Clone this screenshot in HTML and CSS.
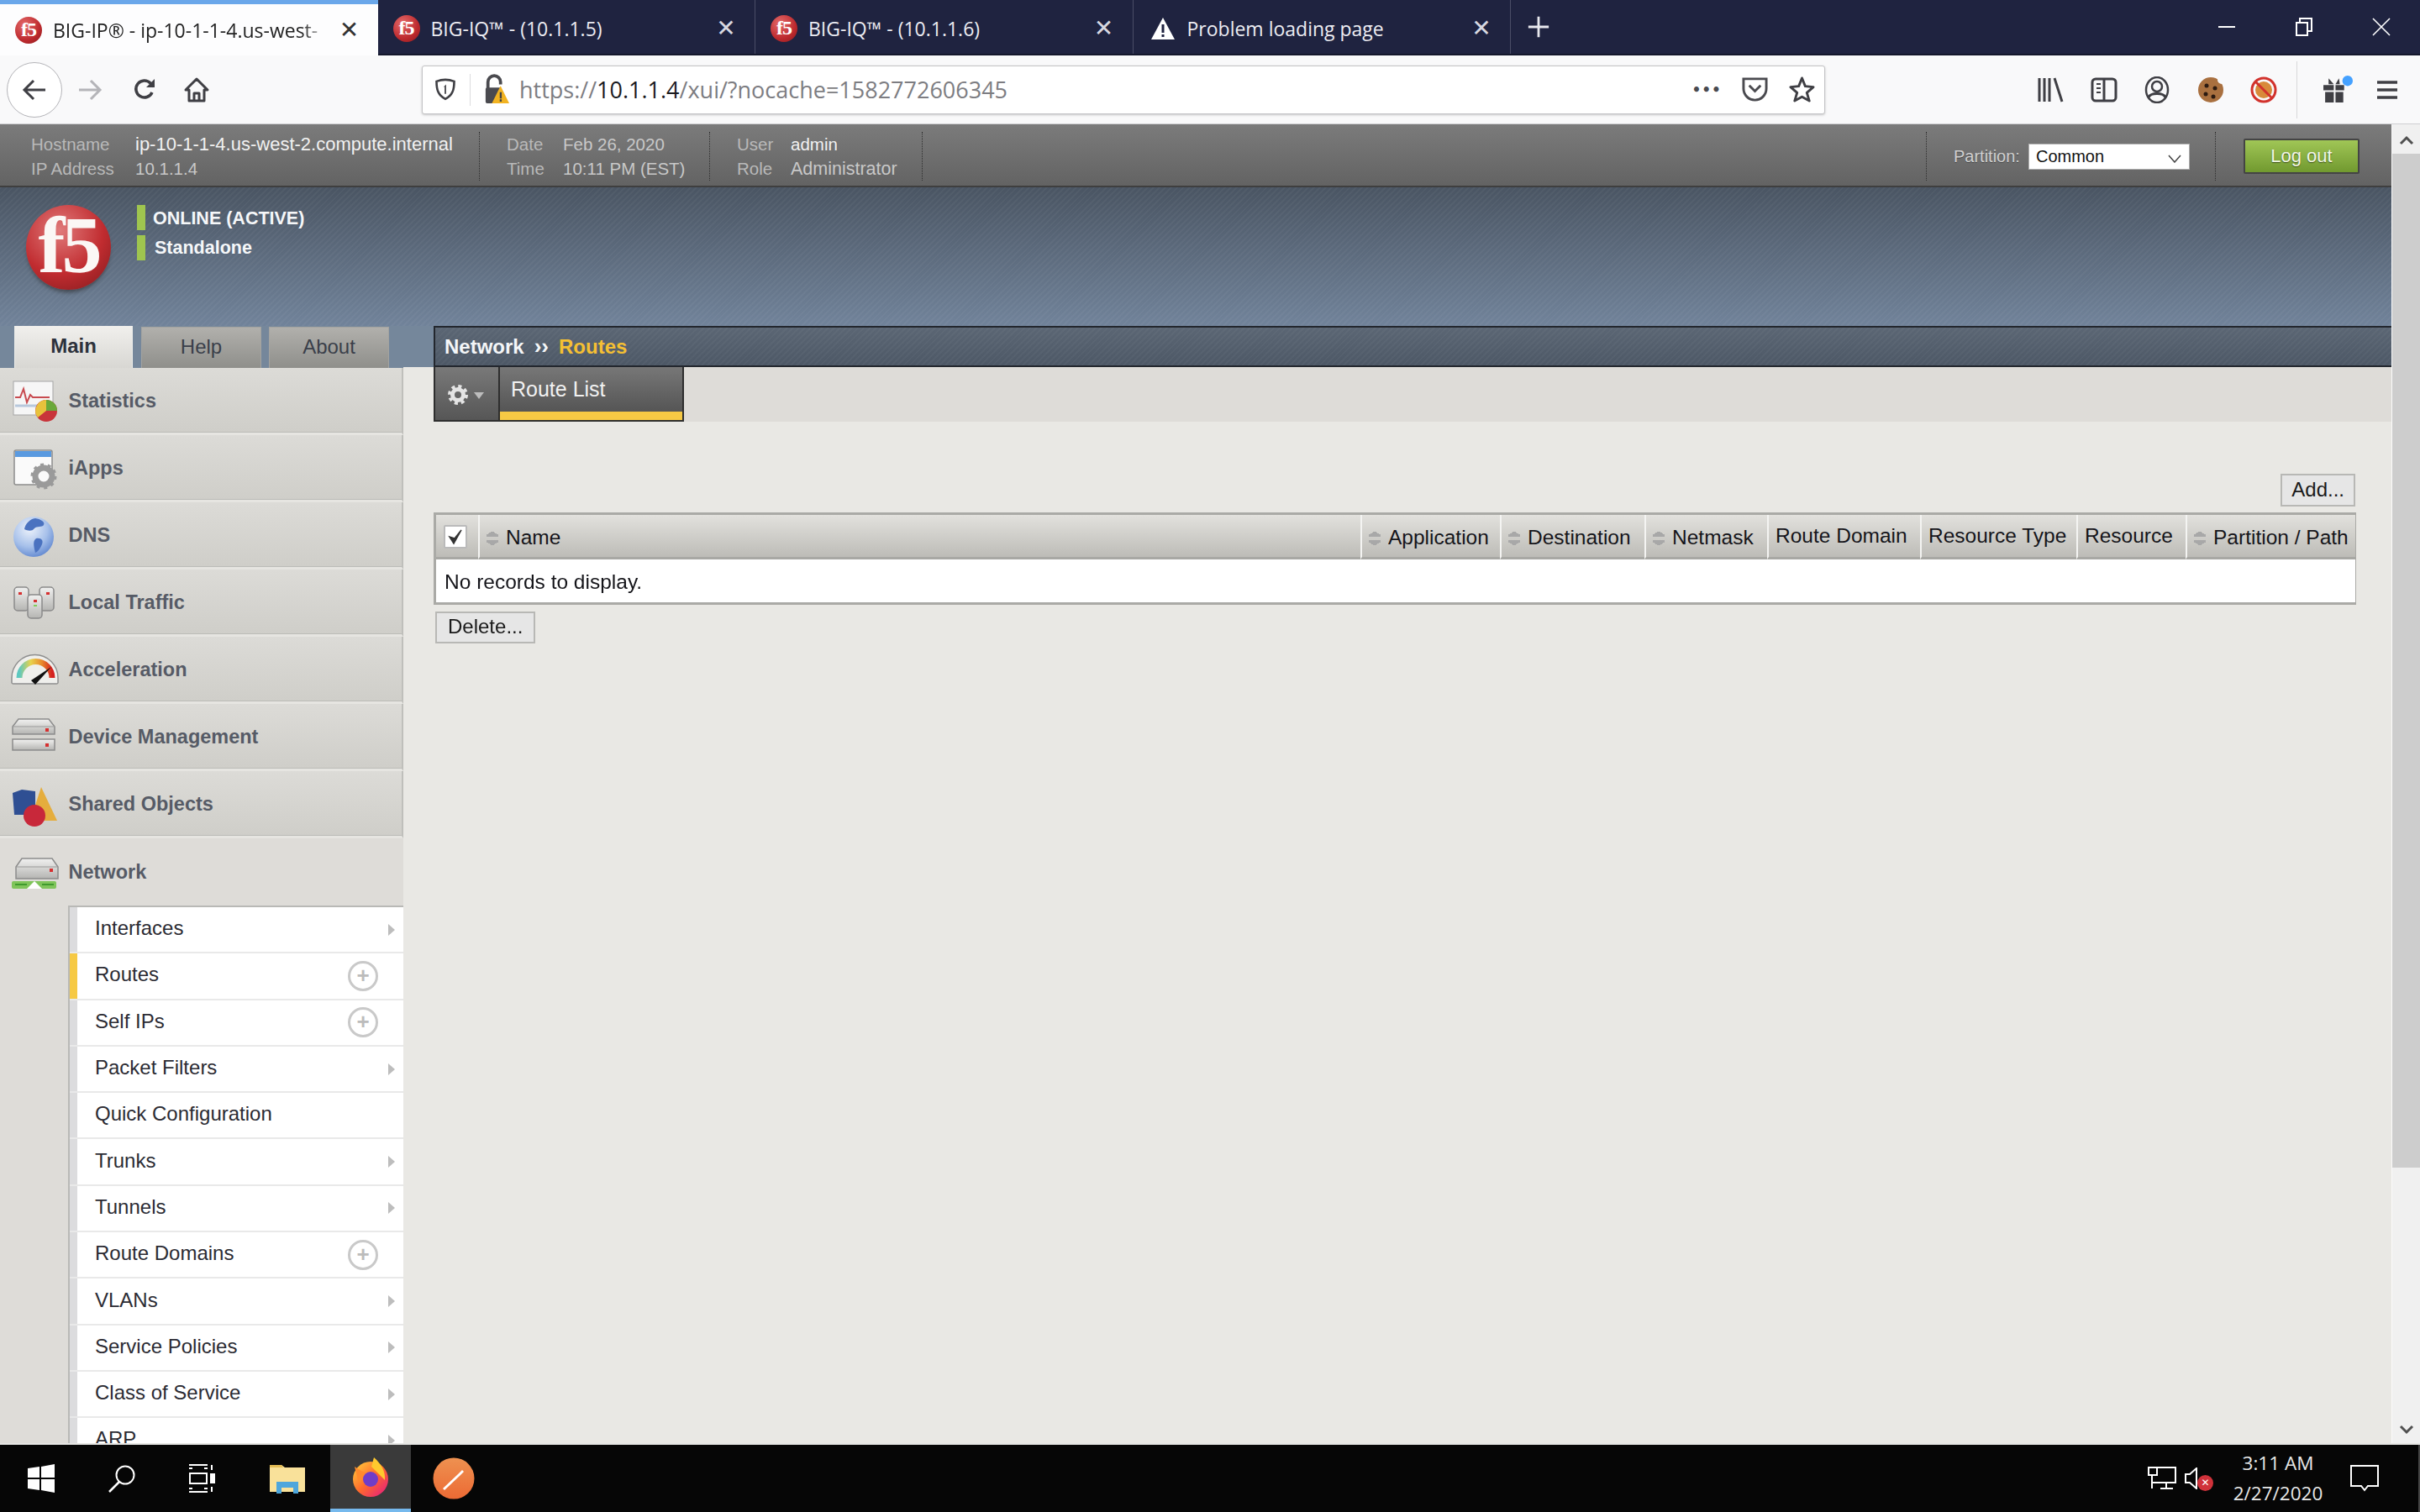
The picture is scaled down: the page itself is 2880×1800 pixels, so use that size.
FILE: index.html
```html
<!DOCTYPE html>
<html lang="en">
<head>
<meta charset="utf-8">
<title>BIG-IP</title>
<link rel="stylesheet" href="styles.css">
</head>
<body>
<div class="screen">
  <svg class="defs" width="0" height="0">
    <defs>
      <radialGradient id="globe" cx="40%" cy="30%" r="75%"><stop offset="0" stop-color="#eef3fb"/><stop offset=".6" stop-color="#a6c0ea"/><stop offset="1" stop-color="#5f86cf"/></radialGradient>
      <linearGradient id="metal" x1="0" y1="0" x2="0" y2="1"><stop offset="0" stop-color="#f1f1f0"/><stop offset="1" stop-color="#b5b5b2"/></linearGradient>
      <linearGradient id="fox" x1="0" y1="0" x2="1" y2="1"><stop offset="0" stop-color="#ffd43c"/><stop offset=".5" stop-color="#ff6a2c"/><stop offset="1" stop-color="#e31587"/></linearGradient>
      <linearGradient id="arcg" x1="0" y1="0" x2="1" y2="0"><stop offset="0" stop-color="#5cc8c0"/><stop offset=".35" stop-color="#e8d24c"/><stop offset=".7" stop-color="#e8862c"/><stop offset="1" stop-color="#d42020"/></linearGradient>
      <linearGradient id="orange" x1="0" y1="0" x2="0" y2="1"><stop offset="0" stop-color="#ee9150"/><stop offset="1" stop-color="#ec6a34"/></linearGradient>
    </defs>
  </svg>

  <div class="tabstrip">
    <div class="btab btab-active"><span class="fav">f5</span><span class="btitle btitle-fade">BIG-IP® - ip-10-1-1-4.us-west-</span><span class="bclose">✕</span></div>
    <div class="btab"><span class="fav">f5</span><span class="btitle">BIG-IQ™ - (10.1.1.5)</span><span class="bclose">✕</span></div>
    <div class="btab"><span class="fav">f5</span><span class="btitle">BIG-IQ™ - (10.1.1.6)</span><span class="bclose">✕</span></div>
    <div class="btab"><svg class="warnfav" viewBox="0 0 30 30"><path d="M15 2 29 28H1Z" fill="#fff"/><path d="M13.5 10h3v10h-3zM13.5 22h3v3h-3z" fill="#1f2340"/></svg><span class="btitle">Problem loading page</span><span class="bclose">✕</span></div>
    <svg class="newtab" viewBox="0 0 30 30"><path d="M15 2v26M2 15h26" stroke="#e8e8ee" stroke-width="3"/></svg>
    <div class="winctl">
      <svg class="wbtn" viewBox="0 0 22 22"><path d="M1 11h20" stroke="#fff" stroke-width="2"/></svg>
      <svg class="wbtn" viewBox="0 0 22 22"><path d="M2 6h13v15H2zM6 6V1h14v15h-5" fill="none" stroke="#fff" stroke-width="2"/></svg>
      <svg class="wbtn" viewBox="0 0 22 22"><path d="M1 1l20 20M21 1 1 21" stroke="#fff" stroke-width="1.6"/></svg>
    </div>
  </div>

  <div class="toolbar">
    <div class="backbtn"><svg class="tico" viewBox="0 0 32 32"><path d="M29 16H4M15 5 4 16l11 11" fill="none" stroke="#3f3f44" stroke-width="3"/></svg></div>
    <svg class="tico tico-fwd" viewBox="0 0 32 32"><path d="M3 16h25M17 5l11 11-11 11" fill="none" stroke="#b4b4b8" stroke-width="3"/></svg>
    <svg class="tico tico-reload" viewBox="0 0 32 32"><path d="M25 19a10 10 0 1 1-2-11l4 4" fill="none" stroke="#3f3f44" stroke-width="3.500"/><path d="M28 3v10H18z" fill="#3f3f44"/></svg>
    <svg class="tico tico-home" viewBox="0 0 32 32"><path d="M3 16 16 3l13 13h-4v13H7V16ZM13 29v-9h6v9" fill="none" stroke="#3f3f44" stroke-width="3" stroke-linejoin="round"/></svg>
    <div class="urlbar">
      <svg class="uico uico-shield" viewBox="0 0 32 32"><path d="M4 5c8-3 16-3 24 0 0 11-2 19-12 24C6 24 4 16 4 5Z" fill="none" stroke="#3f3f44" stroke-width="3"/><path d="M17 9v13h-2v-10l-2 1" fill="#3f3f44"/></svg>
      <span class="usep"></span>
      <svg class="uico uico-lock" viewBox="0 0 32 38"><path d="M5 17V9a8 8 0 0 1 16 0v3" fill="none" stroke="#4a4a4f" stroke-width="4"/><rect x="2" y="16" width="20" height="20" rx="2" fill="#4a4a4f"/><path d="M21 14 32 36H10Z" fill="#f2b321"/><path d="M20 22h2.500v8H20zM20 31h2.500v3H20z" fill="#444"/></svg>
      <span class="url"><span class="urlmuted">https://</span><span class="urlhost">10.1.1.4</span><span class="urlmuted">/xui/?nocache=1582772606345</span></span>
      <span class="udots">•••</span>
      <svg class="uico uico-pocket" viewBox="0 0 32 32"><path d="M2 3h28v12a14 14 0 0 1-28 0Z" fill="none" stroke="#4a4a4f" stroke-width="3"/><path d="m9 11 7 7 7-7" fill="none" stroke="#4a4a4f" stroke-width="3"/></svg>
      <svg class="uico uico-star" viewBox="0 0 32 32"><path d="m16 2 4 10 10 1-8 7 3 10-9-5-9 5 3-10-8-7 10-1Z" fill="none" stroke="#3f3f44" stroke-width="3" stroke-linejoin="round"/></svg>
    </div>
    <svg class="rico rico-first" viewBox="0 0 32 32"><path d="M3 2v28M9 2v28M15 2v28M21 2l9 28" fill="none" stroke="#3f3f44" stroke-width="3"/></svg>
    <svg class="rico" viewBox="0 0 32 32"><rect x="2" y="3" width="28" height="26" rx="4" fill="none" stroke="#3f3f44" stroke-width="3"/><path d="M16 3v26" stroke="#3f3f44" stroke-width="3"/><path d="M7 9h5M7 14h5M7 19h5" stroke="#3f3f44" stroke-width="2"/></svg>
    <svg class="rico" viewBox="0 0 32 32"><ellipse cx="16" cy="16" rx="13" ry="15" fill="none" stroke="#3f3f44" stroke-width="2.500"/><circle cx="16" cy="12" r="6" fill="none" stroke="#3f3f44" stroke-width="2.500"/><path d="M6 25c2-6 18-6 20 0" fill="none" stroke="#3f3f44" stroke-width="3"/></svg>
    <svg class="rico" viewBox="0 0 32 32"><circle cx="16" cy="16" r="15" fill="#a9703f"/><circle cx="29" cy="4" r="5" fill="#f9f9fa"/><circle cx="11" cy="11" r="2.500" fill="#2b1a10"/><circle cx="21" cy="14" r="2.500" fill="#2b1a10"/><circle cx="10" cy="21" r="2.500" fill="#2b1a10"/><circle cx="19" cy="24" r="2.500" fill="#2b1a10"/></svg>
    <svg class="rico" viewBox="0 0 32 32"><circle cx="16" cy="16" r="10" fill="#d88a3a"/><circle cx="16" cy="16" r="14" fill="none" stroke="#d2322c" stroke-width="3"/><path d="M6 6l20 20" stroke="#d2322c" stroke-width="3"/></svg>
    <span class="rsep"></span>
    <svg class="rgift" viewBox="0 0 36 32"><circle cx="30" cy="6" r="6" fill="#45a1ff"/><path d="M2 11h12v6H2zM16 11h10v6H16zM4 19h10v12H4zM16 19h9v12h-9zM8 3l6 7H8ZM20 3l-4 7h5Z" fill="#3f3f44"/></svg>
    <svg class="rburger" viewBox="0 0 26 26"><path d="M1 4h24M1 13h24M1 22h24" stroke="#3f3f44" stroke-width="3.500"/></svg>
  </div>

  <div class="page">
    <div class="app">
      <div class="hdr">
        <div class="hgroup hgroup-host">
          <div class="hrow"><span class="hlabel hl-host">Hostname</span><span class="hval hval-host">ip-10-1-1-4.us-west-2.compute.internal</span></div>
          <div class="hrow"><span class="hlabel hl-host">IP Address</span><span class="hval hval-dim">10.1.1.4</span></div>
        </div>
        <div class="hgroup hgroup-date">
          <div class="hrow"><span class="hlabel hl-date">Date</span><span class="hval hval-dim">Feb 26, 2020</span></div>
          <div class="hrow"><span class="hlabel hl-date">Time</span><span class="hval hval-dim">10:11 PM (EST)</span></div>
        </div>
        <div class="hgroup hgroup-user">
          <div class="hrow"><span class="hlabel hl-user">User</span><span class="hval">admin</span></div>
          <div class="hrow"><span class="hlabel hl-user">Role</span><span class="hval hval-dim">Administrator</span></div>
        </div>
        <div class="hgroup hgroup-part">
          <span class="partlabel">Partition:</span>
          <div class="partsel"><span>Common</span><svg class="partchev" viewBox="0 0 16 10"><path d="m1 1 7 8 7-8" fill="none" stroke="#444" stroke-width="1.500"/></svg></div>
        </div>
        <div class="logout">Log out</div>
      </div>

      <div class="banner">
        <div class="logo"><span class="logotext">f5</span></div>
        <div class="status">
          <div class="statline"><span class="statbar"></span><span class="stattext">ONLINE (ACTIVE)</span></div>
          <div class="statline statline-2"><span class="statbar"></span><span>Standalone</span></div>
        </div>
      </div>

      <div class="work">
        <nav class="nav">
          <div class="navtabs">
            <div class="ntab ntab-on">Main</div>
            <div class="ntab">Help</div>
            <div class="ntab">About</div>
          </div>
          <div class="sec">
            <svg class="secico" viewBox="0 0 60 60"><rect x="4" y="7" width="47" height="40" fill="#f6f6f6" stroke="#a5a5a5"/><path d="M6 26h6l4-10 4 16 4-9 3 3h20" fill="none" stroke="#c84b50" stroke-width="2"/><path d="M6 36h40" stroke="#b7c8dc" stroke-width="3"/><circle cx="43" cy="42" r="13" fill="#c8343a"/><path d="M43 42V29a13 13 0 0 1 13 13Z" fill="#6aa83a"/><path d="M43 42V29a13 13 0 0 0-10 21Z" fill="#e8c23c"/></svg>
            <span>Statistics</span>
          </div>
          <div class="sec">
            <svg class="secico" viewBox="0 0 60 60"><rect x="5" y="9" width="45" height="41" rx="2" fill="#fafafa" stroke="#8c8c8c" stroke-width="1.500"/><rect x="6" y="10" width="43" height="7" fill="#5a9ae0"/><circle cx="40" cy="40" r="10" fill="none" stroke="#9a9a9a" stroke-width="7"/><circle cx="40" cy="40" r="14" fill="none" stroke="#9a9a9a" stroke-width="3" stroke-dasharray="4 4.800"/></svg>
            <span>iApps</span>
          </div>
          <div class="sec">
            <svg class="secico" viewBox="0 0 60 60"><circle cx="28" cy="32" r="24" fill="url(#globe)"/><path d="M30 10c6 1 12 4 10 8-2 3-8 1-11 4-3 4-8 3-12 1 1-6 6-12 13-13ZM31 34c6-1 9 2 7 7-2 5-5 9-8 10-1-5-4-14 1-17Z" fill="#4a72c0"/></svg>
            <span>DNS</span>
          </div>
          <div class="sec">
            <svg class="secico" viewBox="0 0 60 60"><rect x="5" y="12" width="17" height="28" rx="4" fill="url(#metal)" stroke="#8a8a8a" stroke-width="1.500"/><rect x="35" y="12" width="17" height="28" rx="4" fill="url(#metal)" stroke="#8a8a8a" stroke-width="1.500"/><rect x="21" y="21" width="17" height="28" rx="4" fill="url(#metal)" stroke="#8a8a8a" stroke-width="1.500"/><rect x="10" y="18" width="4" height="3" fill="#d63030"/><rect x="43" y="18" width="4" height="3" fill="#d63030"/><rect x="28" y="27" width="4" height="3" fill="#d63030"/><rect x="28" y="33" width="4" height="2" fill="#7fd05a"/></svg>
            <span>Local Traffic</span>
          </div>
          <div class="sec">
            <svg class="secico" viewBox="0 0 60 60"><path d="M2 46v-6a27 27 0 0 1 55 0v6a2 2 0 0 1-2 1H4a2 2 0 0 1-2-1Z" fill="#efefec" stroke="#8f8f8f" stroke-width="1.500"/><path d="M11 40a19 19 0 0 1 39 0" fill="none" stroke="url(#arcg)" stroke-width="7"/><path d="m25 43 24-16-19 21Z" fill="#111"/></svg>
            <span>Acceleration</span>
          </div>
          <div class="sec">
            <svg class="secico" viewBox="0 0 60 60"><path d="M3 18 10 9h36l7 9v9H3Z" fill="url(#metal)" stroke="#8c8c8c" stroke-width="1.500"/><path d="M3 33h50v13H3Z" fill="url(#metal)" stroke="#8c8c8c" stroke-width="1.500"/><path d="M3 18h50" stroke="#9a9a9a"/><rect x="42" y="20" width="4" height="4" fill="#d63030"/><rect x="42" y="38" width="4" height="4" fill="#d63030"/></svg>
            <span>Device Management</span>
          </div>
          <div class="sec">
            <svg class="secico" viewBox="0 0 60 60"><path d="M37 10 56 50H24Z" fill="#e5ad3d"/><path d="M3 17 14 13l16 2v28H5Z" fill="#2f4f93"/><circle cx="29" cy="44" r="13" fill="#c8283a"/></svg>
            <span>Shared Objects</span>
          </div>
          <div class="sec sec-open">
            <svg class="secico" viewBox="0 0 60 60"><path d="M7 24 14 14h36l7 10v14H7Z" fill="url(#metal)" stroke="#8c8c8c" stroke-width="1.500"/><path d="M8 24h48" stroke="#999"/><rect x="47" y="26" width="4" height="4" fill="#d63030"/><rect x="2" y="41" width="53" height="9" rx="2" fill="#7fc45a"/><path d="M6 45h14M38 45h14" stroke="#3f9a2e" stroke-width="2"/><path d="M20 50l9-9 9 9Z" fill="#fff"/></svg>
            <span>Network</span>
          </div>
          <div class="subwrap">
            <ul class="sub">
              <li class="si"><span>Interfaces</span><i class="arrow"></i></li>
              <li class="si si-on"><span>Routes</span><i class="plus">+</i></li>
              <li class="si"><span>Self IPs</span><i class="plus">+</i></li>
              <li class="si"><span>Packet Filters</span><i class="arrow"></i></li>
              <li class="si"><span>Quick Configuration</span></li>
              <li class="si"><span>Trunks</span><i class="arrow"></i></li>
              <li class="si"><span>Tunnels</span><i class="arrow"></i></li>
              <li class="si"><span>Route Domains</span><i class="plus">+</i></li>
              <li class="si"><span>VLANs</span><i class="arrow"></i></li>
              <li class="si"><span>Service Policies</span><i class="arrow"></i></li>
              <li class="si"><span>Class of Service</span><i class="arrow"></i></li>
              <li class="si"><span>ARP</span><i class="arrow"></i></li>
            </ul>
          </div>
        </nav>

        <main class="main">
          <div class="crumbwrap">
            <div class="crumb"><span>Network</span><span class="crumbsep">››</span><span class="crumbcur">Routes</span></div>
          </div>
          <div class="subtabs">
            <div class="gearbox">
              <svg class="gear" viewBox="0 0 24 24"><circle cx="12" cy="12" r="6.500" fill="none" stroke="#e4e4e4" stroke-width="5"/><circle cx="12" cy="12" r="10" fill="none" stroke="#e4e4e4" stroke-width="4" stroke-dasharray="4 3.850"/></svg>
              <i class="caret"></i>
            </div>
            <div class="routetab">Route List</div>
          </div>
          <div class="content">
            <div class="actions"><div class="btn">Add...</div></div>
            <table class="grid">
              <colgroup><col class="c0"><col class="c1"><col class="c2"><col class="c3"><col class="c4"><col class="c5"><col class="c6"><col class="c7"><col class="c8"></colgroup>
              <thead>
                <tr>
                  <th class="thchk"><span class="chk"><svg viewBox="0 0 20 20"><path d="m3 10 5 8L17 2l-8 10Z" fill="#333" stroke="#333" stroke-width="1.500"/></svg></span></th>
                  <th><i class="sort"></i>Name</th>
                  <th><i class="sort"></i>Application</th>
                  <th><i class="sort"></i>Destination</th>
                  <th><i class="sort"></i>Netmask</th>
                  <th class="plain">Route Domain</th>
                  <th class="plain">Resource Type</th>
                  <th class="plain">Resource</th>
                  <th><i class="sort"></i>Partition / Path</th>
                </tr>
              </thead>
              <tbody><tr><td colspan="9">No records to display.</td></tr></tbody>
            </table>
            <div class="btn btn-del">Delete...</div>
          </div>
        </main>
      </div>
    </div>
    <div class="vscroll">
      <svg class="vchev" viewBox="0 0 18 12"><path d="m2 10 7-7 7 7" fill="none" stroke="#505050" stroke-width="3"/></svg>
      <div class="vthumb"></div>
      <svg class="vchev vchev-down" viewBox="0 0 18 12"><path d="m2 2 7 7 7-7" fill="none" stroke="#505050" stroke-width="3"/></svg>
    </div>
  </div>

  <div class="taskbar">
    <svg class="tk tk-win" viewBox="0 0 34 34"><path d="M1 5l14-2v13H1ZM17 3l16-3v16H17ZM1 18h14v13L1 29ZM17 18h16v16l-16-3Z" fill="#fff"/></svg>
    <svg class="tk tk-search" viewBox="0 0 34 34"><circle cx="21" cy="13" r="10.500" fill="none" stroke="#fff" stroke-width="2"/><path d="M14 21 2 33" stroke="#fff" stroke-width="2.500"/></svg>
    <svg class="tk tk-view" viewBox="0 0 34 34"><path d="M1 1h22M1 33h22M1 5h4M19 5h4M1 29h4M19 29h4M28 1v6M28 27v6" stroke="#fff" stroke-width="2" fill="none"/><rect x="2" y="11" width="20" height="12" fill="none" stroke="#fff" stroke-width="2"/><rect x="26" y="11" width="6" height="12" fill="#fff"/></svg>
    <svg class="tk tk-folder" viewBox="0 0 44 36"><path d="M1 2h14l4 3h24v29H1Z" fill="#f9e19a"/><path d="M1 2h14l2 3H1Z" fill="#e4bd56"/><path d="M9 36V22h26v14h-6v-7H15v7Z" fill="#4ea6dc"/></svg>
    <div class="tk-fx"><svg class="fx" viewBox="0 0 46 48"><circle cx="23" cy="27" r="21" fill="url(#fox)"/><path d="M27 1c8 7 14 16 13 27L24 12Z" fill="#ffc92e"/><path d="M4 12c6 4 12 8 16 7L9 32Z" fill="#ff8a2c"/><circle cx="23" cy="27" r="9" fill="#6f3dc8"/></svg></div>
    <svg class="tk tk-post" viewBox="0 0 50 50"><circle cx="25" cy="25" r="24.500" fill="url(#orange)"/><path d="M12 37 30 20l5-5 2 2-5 5-18 17Z" fill="#fff"/></svg>
    <div class="tray">
      <svg class="tray-net" viewBox="0 0 34 28"><path d="M11 1h22v18H5V10" fill="none" stroke="#fff" stroke-width="2"/><rect x="1" y="1" width="10" height="9" fill="none" stroke="#fff" stroke-width="2"/><path d="M5 10v16M15 26h15M22 19v7" fill="none" stroke="#fff" stroke-width="2"/></svg>
      <div class="tray-vol">
        <svg class="tray-spk" viewBox="0 0 16 26"><path d="M14 1v24L6 18H1V8h5Z" fill="none" stroke="#fff" stroke-width="2"/></svg>
        <span class="tray-x">✕</span>
      </div>
      <div class="clock"><div>3:11 AM</div><div>2/27/2020</div></div>
      <svg class="tray-note" viewBox="0 0 34 34"><path d="M1 2h32v24H21l-4 5-4-5H1Z" fill="none" stroke="#fff" stroke-width="2"/></svg>
    </div>
  </div>
</div>
</body>
</html>
```

FILE: styles.css
```css
* { box-sizing: border-box; }
html, body { margin: 0; padding: 0; background: #060606; }
.screen {
  width: 2880px; height: 1800px; overflow: hidden;
  display: flex; flex-direction: column;
  font-family: "Liberation Sans", Arial, sans-serif;
  filter: blur(0.55px);
}
.defs { position: absolute; }

/* browser tabs */
.tabstrip { height: 66px; flex: none; display: flex; align-items: stretch; background: #1f2340; border-bottom: 2px solid #14172c; color: #fff; }
.btab { width: 449.500px; display: flex; align-items: center; padding: 3px 18px 0 18px; border-right: 1px solid #4a4d66; font-family: "Open Sans", sans-serif; font-size: 23px; color: #ececf2; }
.btab-active { background: #fdfdfe; color: #222; border-top: 5px solid #6aa7ea; border-right: 0; margin-bottom: -2px; padding-top: 0; }
.fav { width: 32px; height: 32px; flex: none; border-radius: 50%; background: radial-gradient(circle at 35% 30%, #e46a6a, #bd2a2e 60%, #8a1a1e); color: #fff; font: bold 24px/30px "Liberation Serif", serif; text-align: center; letter-spacing: -1px; }
.warnfav { width: 30px; height: 30px; flex: none; margin: 0 1px 0 2px; }
.btitle { margin-left: 13px; flex: 1; white-space: nowrap; overflow: hidden; }
.btitle-fade { -webkit-mask-image: linear-gradient(90deg, #000 90%, transparent 100%); mask-image: linear-gradient(90deg, #000 90%, transparent 100%); }
.bclose { width: 28px; flex: none; font-size: 28px; line-height: 30px; text-align: center; font-family: "DejaVu Sans", sans-serif; color: #d8d8e0; margin-right: 2px; margin-left: 10px; }
.btab-active .bclose { color: #333; }
.newtab { width: 28px; height: 28px; align-self: center; margin-left: 19px; }
.winctl { margin-left: auto; display: flex; align-items: center; }
.wbtn { width: 22px; height: 22px; margin-right: 70px; }
.wbtn:last-child { margin-right: 35px; }

/* toolbar */
.toolbar { height: 82px; flex: none; display: flex; align-items: center; background: #f9f9fa; border-bottom: 1px solid #cfcfd2; }
.backbtn { width: 66px; height: 66px; margin-left: 8px; border-radius: 50%; border: 1.500px solid #b4b4b8; background: #fff; display: flex; align-items: center; justify-content: center; }
.tico { width: 32px; height: 32px; flex: none; }
.tico-fwd { margin-left: 17px; }
.tico-reload { margin-left: 33px; }
.tico-home { margin-left: 30px; }
.urlbar { width: 1670px; height: 58px; margin-left: 252px; flex: none; display: flex; align-items: center; background: #fff; border: 1px solid #c4c4c6; border-radius: 3px; box-shadow: 0 1px 3px rgba(0,0,0,.2); }
.uico { flex: none; width: 31px; height: 31px; }
.uico-shield { margin-left: 13px; width: 28px; }
.usep { width: 1px; height: 38px; background: #dcdcde; margin-left: 15px; }
.uico-lock { margin-left: 16px; height: 38px; width: 30px; }
.url { margin-left: 12px; font-family: "Open Sans", sans-serif; font-size: 27px; white-space: nowrap; }
.urlmuted { color: #7d7d82; }
.urlhost { color: #1a1a1f; }
.udots { margin-left: auto; font-size: 17px; letter-spacing: 1px; color: #4a4a4f; font-family: "DejaVu Sans", sans-serif; font-weight: bold; }
.uico-pocket { margin-left: 24px; }
.uico-star { margin-left: 25px; margin-right: 11px; }
.rico { width: 32px; height: 32px; flex: none; margin-left: 31.500px; }
.rico-first { margin-left: 252px; }
.rsep { width: 1px; height: 68px; background: #d8d8da; margin-left: 23px; }
.rgift { width: 37px; height: 33px; margin-left: 29px; flex: none; }
.rburger { width: 26px; height: 26px; margin-left: 28px; flex: none; }

/* page */
.page { flex: 1; min-height: 0; display: flex; }
.app { flex: 1; min-width: 0; display: flex; flex-direction: column; background: #e9e8e4; }
.vscroll { width: 34px; flex: none; background: #f0f0f0; display: flex; flex-direction: column; align-items: center; border-left: 1px solid #fafafa; }
.vchev { width: 18px; height: 12px; flex: none; margin-top: 13px; }
.vthumb { width: 33px; height: 1207px; margin-top: 10px; background: #cdcdcd; }
.vchev-down { margin-top: auto; margin-bottom: 10px; }

/* app header */
.hdr { height: 75px; flex: none; display: flex; background: linear-gradient(#7b7b7b, #636363); border-bottom: 2px solid #3f3f3f; font-size: 20.500px; padding-top: 9px; }
.hgroup { height: 58px; display: flex; flex-direction: column; justify-content: space-around; border-right: 1px dotted #2e2e2e; }
.hrow { display: flex; white-space: nowrap; line-height: 28px; }
.hlabel { color: #b9b9b9; flex: none; font-size: 20.500px; }
.hval { color: #f1f1f1; }
.hval-dim { color: #c8c8c8; }
.hval-host { font-size: 22px; }
.hgroup-host { width: 571px; padding-left: 37px; }
.hl-host { width: 124px; }
.hgroup-date { width: 274px; padding-left: 32px; }
.hl-date { width: 67px; }
.hgroup-user { width: 253px; padding-left: 32px; }
.hgroup-user .hval-dim { font-size: 21.500px; }
.hl-user { width: 64px; }
.hgroup-part { margin-left: 1194px; width: 345px; flex-direction: row; justify-content: flex-start; align-items: center; border-left: 1px dotted #2e2e2e; padding-left: 32px; color: #d0d0d0; font-size: 20px; }
.partlabel { text-shadow: 0 1px 0 #444; margin-top: 1px; }
.partsel { width: 192px; height: 31px; margin: 1px 0 0 10px; background: #fff; color: #111; display: flex; align-items: center; justify-content: space-between; padding: 0 9px 0 8px; border: 1px solid #b0b0b0; }
.partchev { width: 16px; height: 10px; margin-top: 5px; }
.logout { width: 138px; height: 42px; margin: 8px 0 0 33px; background: linear-gradient(#a0c656, #71992f); border: 2px solid #444; border-radius: 2px; color: #f2f6e8; font-size: 22px; line-height: 38px; text-align: center; text-shadow: 0 1px 1px #3b5214; }

/* banner */
.banner {
  height: 165px; flex: none; display: flex; padding: 21px 0 0 31px; color: #fff;
  background:
    repeating-linear-gradient(135deg, rgba(255,255,255,.035) 0 2px, rgba(0,0,0,0) 2px 5px),
    linear-gradient(#4a5563, #71839a);
}
.logo { width: 101px; height: 101px; border-radius: 50%; background: radial-gradient(circle at 40% 30%, #e07a7a, #c12c30 55%, #7f1a1d); box-shadow: 0 5px 5px -2px rgba(40,40,40,.6); display: flex; align-items: center; justify-content: center; flex: none; }
.logotext { font: bold 96px/90px "Liberation Serif", serif; color: #fbf7f5; letter-spacing: -4px; margin-top: -6px; }
.status { margin-left: 31px; font-size: 21.500px; font-weight: bold; }
.statline { height: 30px; display: flex; align-items: center; gap: 9px; white-space: nowrap; color: #f5f7f9; }
.stattext { margin-top: 3px; }
.statline-2 { margin-top: 6px; gap: 11px; }
.statbar { width: 10px; height: 30px; background: #9fc54f; }

/* work area */
.work { flex: 1; min-height: 0; display: flex; }
.nav { width: 480px; flex: none; display: flex; flex-direction: column; background: #dedcd8; overflow: hidden; }
.navtabs { height: 50px; flex: none; display: flex; gap: 9px; padding-left: 17px; background: #75879b; }
.ntab { width: 143px; height: 49px; margin-top: 1px; background: linear-gradient(#b1b0ac, #8f8f8b); border: 1px solid #a3a3a0; border-bottom: 0; color: #3a3f4a; font-size: 24px; line-height: 46px; text-align: center; }
.ntab-on { width: 141px; height: 50px; margin-top: 0; margin-right: 1px; font-weight: bold; background: linear-gradient(#f0efec, #d8d7d3); border-color: #eeeeea; color: #2d323c; }
.sec { height: 80px; flex: none; display: flex; align-items: center; padding-left: 12px; background: linear-gradient(#dcdbd7, #cfcec9); border-bottom: 3px solid #e6e5e1; border-right: 2px solid #bfbfbb; box-shadow: inset 0 -1px 0 #bcbcb8; color: #565b66; font-size: 23.500px; font-weight: bold; }
.sec span { margin: 2px 0 0 9.500px; }
.sec-open { background: #dedcd8; border: 0; box-shadow: none; }
.sec-open span { margin-top: 0; }
.secico { width: 60px; height: 60px; flex: none; }
.subwrap { flex: 1; min-height: 0; padding-left: 81px; overflow: hidden; }
.sub { list-style: none; margin: 0; padding: 0; border-left: 2px solid #b9b9b6; border-top: 2px solid #b9b9b6; }
.si { height: 55.300px; padding-left: 21px; padding-right: 10px; display: flex; align-items: center; justify-content: space-between; background: #fff; border-bottom: 2px solid #e9e9e9; color: #2b2b33; font-size: 24px; box-shadow: inset 9px 0 0 #dcdcde; }
.si span { padding-left: 9px; margin-top: -3px; }
.si-on { box-shadow: inset 9px 0 0 #f6c944; }
.arrow { width: 0; height: 0; border-left: 8px solid #bdbdbd; border-top: 7px solid transparent; border-bottom: 7px solid transparent; }
.plus { width: 36px; height: 36px; margin-right: 20px; border: 3px solid #c9c9c9; border-radius: 50%; color: #bcbcbc; font: bold 26px/28px "Liberation Sans", sans-serif; text-align: center; }

/* main */
.main { flex: 1; min-width: 0; display: flex; flex-direction: column; }
.crumbwrap { height: 49px; flex: none; padding-left: 36px; background: #75879b; }
.crumb { height: 49px; display: flex; align-items: center; padding-left: 11px; border: 2px solid #23272e; border-right: 0; color: #f4f6f8; font-size: 24px; font-weight: bold;
  background: repeating-linear-gradient(135deg, rgba(255,255,255,.03) 0 2px, rgba(0,0,0,0) 2px 5px), linear-gradient(#5b6674, #4d5866); }
.crumbsep { margin: 0 12px; font-size: 26px; }
.crumbcur { color: #f5c033; }
.subtabs { height: 65px; flex: none; margin-left: 36px; display: flex; background: #dedcd8; }
.gearbox { width: 79px; display: flex; align-items: center; gap: 7px; padding: 2px 0 0 15px; background: linear-gradient(#797979, #565656); border: 2px solid #2e2e2e; border-top: 0; }
.gear { width: 24px; height: 24px; flex: none; }
.caret { width: 0; height: 0; border-top: 8px solid #bdbdbd; border-left: 6px solid transparent; border-right: 6px solid transparent; margin-top: 3px; }
.routetab { width: 219px; height: 65px; padding: 12px 0 0 13px; background: linear-gradient(#777, #555) 0 0 / 100% 53px no-repeat, #f6c944; border: 2px solid #2e2e2e; border-top: 0; border-left: 0; box-shadow: inset 0 -9px 0 #f6c944; color: #f1f1f1; font-size: 25px; line-height: 28px; }
.content { flex: 1; padding: 62px 41px 0 36px; }
.actions { display: flex; justify-content: flex-end; }
.btn { height: 39px; padding: 0 11px; background: #e6e6e6; border: 2px solid #b8b8b5; color: #1a1a1a; font-size: 24px; line-height: 33px; }
.actions .btn { margin-right: 2px; }
.btn-del { display: inline-block; height: 38px; line-height: 32px; padding: 0 13px; margin: 8px 0 0 2px; }
.grid { width: 2288px; margin-top: 7px; table-layout: fixed; border-collapse: separate; border-spacing: 0; border: 3px solid #aaaaa6; border-width: 3px 1px 3px 3px; background: #fff; font-size: 24.500px; color: #15151a; }
.c0 { width: 50px; } .c1 { width: 1050px; } .c2 { width: 166px; } .c3 { width: 172px; } .c4 { width: 146px; } .c5 { width: 182px; } .c6 { width: 186px; } .c7 { width: 130px; } .c8 { width: 202px; }
.grid th { height: 53px; padding: 3px 8px 0; font-weight: normal; text-align: left; white-space: nowrap; background: linear-gradient(#e2e1dd, #bdbcb7); border-left: 2px solid #f4f4f2; border-bottom: 3px solid #a8a8a4; overflow: hidden; }
.grid th.thchk { padding: 0 0 0 9px; border-left: 0; }
.grid th.plain { padding: 0 8px; vertical-align: middle; }
.grid td { height: 51px; padding: 2px 10px 0; }
.chk { display: block; width: 28px; height: 28px; margin-top: 2px; border: 2px solid #bababa; background: #fff; border-radius: 2px; padding: 2px; }
.chk svg { display: block; width: 20px; height: 20px; }
.sort { display: inline-block; width: 14px; height: 22px; margin: 0 9px 0 0; vertical-align: -4px;
  background: linear-gradient(150deg, transparent 50%, #a8a8a8 50%) 0 0 / 7px 9px no-repeat,
              linear-gradient(-150deg, transparent 50%, #a8a8a8 50%) 7px 0 / 7px 9px no-repeat,
              linear-gradient(30deg, transparent 50%, #a8a8a8 50%) 0 13px / 7px 9px no-repeat,
              linear-gradient(-30deg, transparent 50%, #a8a8a8 50%) 7px 13px / 7px 9px no-repeat; }

/* taskbar */
.taskbar { height: 82px; flex: none; display: flex; align-items: center; background: #060606; border-top: 2px solid #e6e6e4; }
.tk { flex: none; }
.tk-win { width: 34px; height: 34px; margin-left: 32px; }
.tk-search { width: 34px; height: 34px; margin-left: 62px; }
.tk-view { width: 34px; height: 34px; margin-left: 62px; }
.tk-folder { width: 44px; height: 36px; margin-left: 62px; }
.tk-fx { width: 96px; height: 80px; margin-left: 29px; display: flex; align-items: center; justify-content: center; background: #3a3a3a; border-bottom: 4px solid #76b9ed; flex: none; }
.fx { width: 46px; height: 48px; }
.tk-post { width: 50px; height: 50px; margin-left: 26px; }
.tray { margin-left: auto; display: flex; align-items: center; border-right: 2px solid #444; height: 80px; padding-right: 8px; color: #fff; }
.tray-net { width: 34px; height: 28px; }
.tray-vol { width: 40px; height: 30px; margin-left: 10px; display: flex; align-items: center; position: relative; }
.tray-spk { width: 16px; height: 26px; }
.tray-x { position: absolute; left: 15px; top: 11px; width: 19px; height: 19px; border-radius: 50%; background: #d0323a; color: #fff; font: bold 12px/19px "DejaVu Sans", sans-serif; text-align: center; }
.clock { width: 130px; margin-left: 6px; text-align: center; font-family: "Open Sans", sans-serif; font-size: 22.500px; line-height: 36px; color: #e8e8e8; }
.tray-note { width: 34px; height: 34px; margin-left: 21px; margin-right: 39px; }
```
